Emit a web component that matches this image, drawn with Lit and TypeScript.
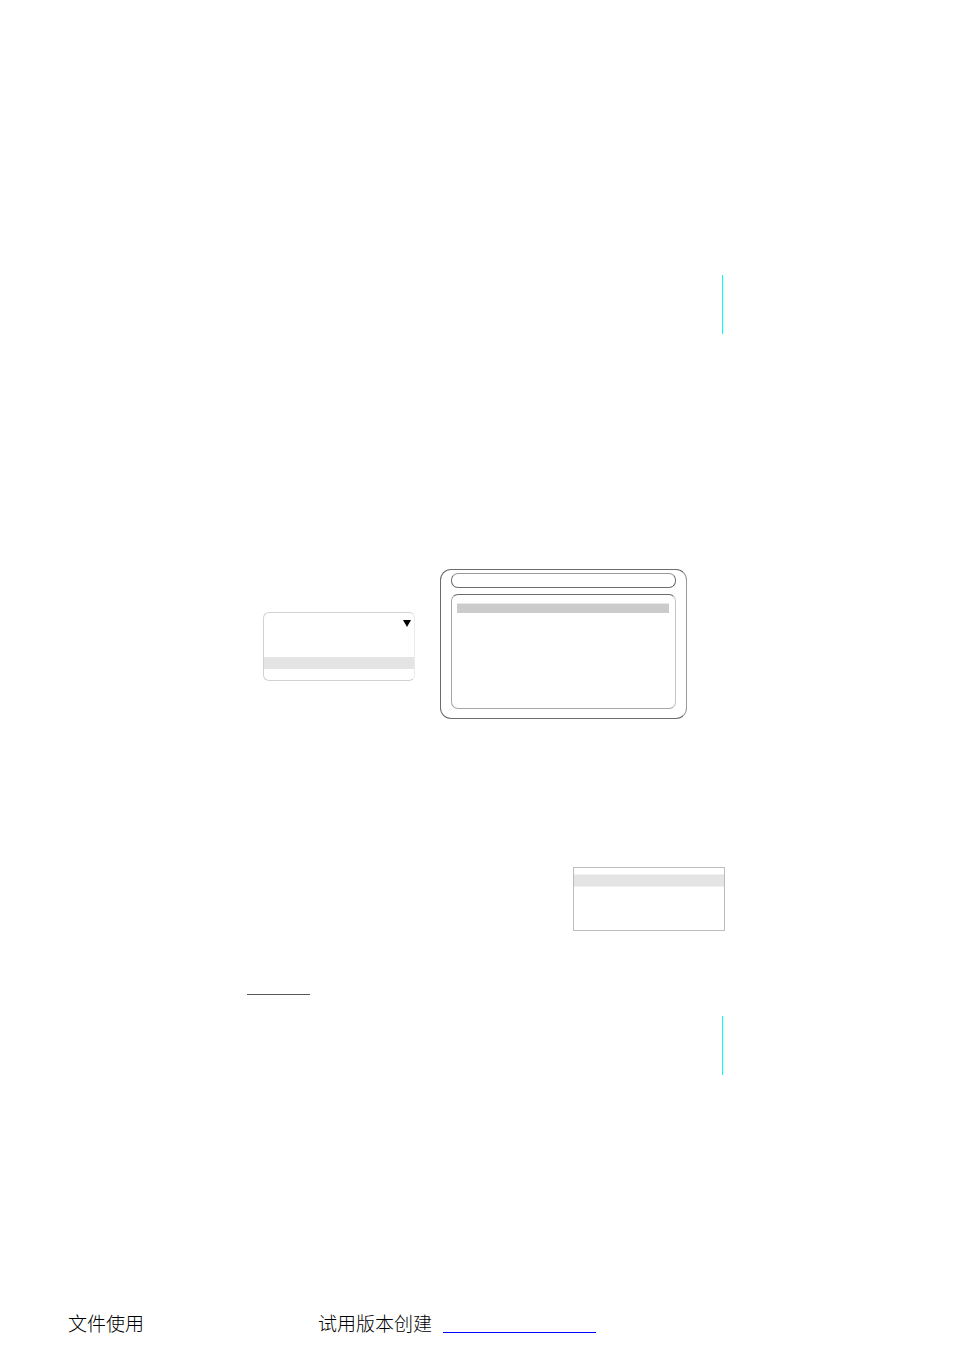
import { LitElement, html, css } from "lit";
import { customElement } from "lit/decorators.js";

@customElement("app-root")
export class AppRoot extends LitElement {
  static styles = css`
    :host {
      display: block;
      background: #fff;
      color: #000;
      font-family: "Noto Sans CJK SC", sans-serif;
    }
    * {
      box-sizing: border-box;
    }
    .content {
      display: flex;
      flex-direction: column;
      padding: 275px 229px 0 247px;
    }
    .marker {
      align-self: flex-end;
      width: 1px;
      height: 59px;
      margin-right: 2px;
      background: #00ffff;
    }
    .figures {
      display: grid;
      grid-template-columns: 152fr 247fr;
      align-items: start;
      gap: 25px;
      margin: 235px 38px 0 16px;
    }
    .keypad {
      height: 69px;
      margin-top: 43px;
      border: 1px solid #d2d2d2;
      border-right-color: #ececec;
      border-radius: 6px;
      display: flex;
      flex-direction: column;
    }
    .arrow {
      align-self: flex-end;
      width: 8px;
      height: 7px;
      margin: 7px 3px 30px 0;
    }
    .bar {
      height: 12px;
      background: #e4e4e4;
    }
    .screen {
      height: 150px;
      padding: 3px 10px 9px;
      border: 1px solid #6c6c6c;
      border-right-color: #999;
      border-radius: 11px;
      display: flex;
      flex-direction: column;
      gap: 6px;
    }
    .title {
      height: 15px;
      border: 1px solid #6c6c6c;
      border-top-color: #999;
      border-radius: 7px;
    }
    .list {
      flex: 1;
      padding: 8px 6px 8px 5px;
      border: 1px solid #a6a6a6;
      border-top-color: #6c6c6c;
      border-right-color: #c4c4c4;
      border-radius: 7px;
    }
    .selected {
      height: 10px;
      background: #cbcbcb;
      border-top: 1px solid #e8e8e8;
    }
    .menu {
      align-self: flex-end;
      width: 152px;
      height: 64px;
      margin-top: 148px;
      padding-top: 6px;
      border: 1px solid #bdbdbd;
    }
    .menu .bar {
      height: 13px;
      border: solid #f0f0f0;
      border-width: 1px 0;
    }
    .rule {
      width: 63px;
      height: 1px;
      margin: 63px 0 21px;
      border: 0;
      background: #585858;
    }
    .footer {
      display: flex;
      margin-top: 234px;
      padding: 0 68px;
      font-size: 19px;
      line-height: 28px;
      font-weight: 300;
      white-space: nowrap;
    }
    .source {
      margin-left: 174px;
    }
    .link {
      width: 153px;
      height: 24px;
      margin-left: 11px;
      border-bottom: 1px solid #0000ff;
    }
  `;

  render() {
    return html`
      <main class="content">
        <div class="marker"></div>
        <div class="figures">
          <div class="keypad">
            <svg class="arrow" viewBox="0 0 8 7" aria-hidden="true">
              <path d="M0 0h8L4 7z" />
            </svg>
            <div class="bar"></div>
          </div>
          <div class="screen">
            <div class="title"></div>
            <div class="list"><div class="selected"></div></div>
          </div>
        </div>
        <div class="menu"><div class="bar"></div></div>
        <hr class="rule" />
        <div class="marker"></div>
      </main>
      <footer class="footer">
        <span>文件使用</span>
        <span class="source">试用版本创建</span>
        <a class="link" href="#"></a>
      </footer>
    `;
  }
}
